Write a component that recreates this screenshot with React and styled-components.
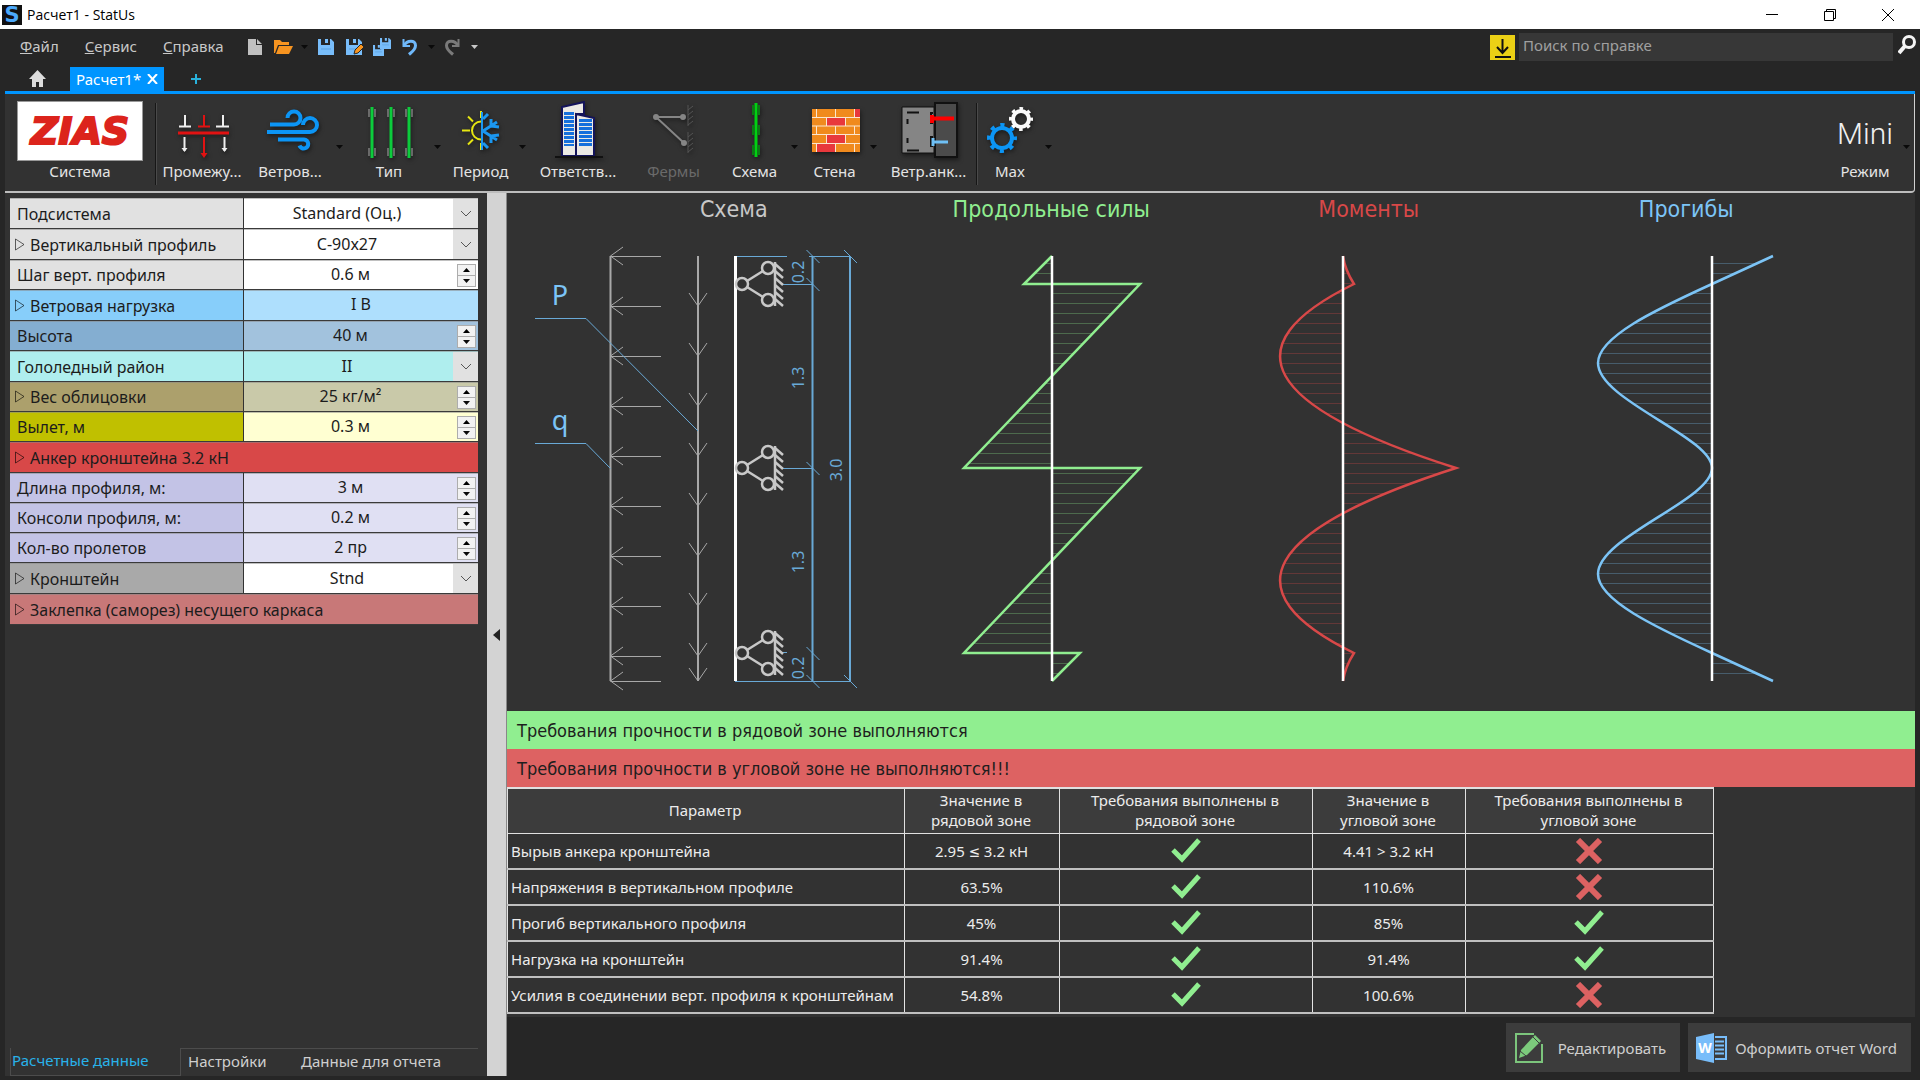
import { useId } from 'react';
import styled, { createGlobalStyle } from 'styled-components';

const GlobalStyle = createGlobalStyle`
  * {
    box-sizing: border-box;
  }
  body {
    margin: 0;
    background: #262626;
    color: #e0e0e0;
    font-family: 'Noto Sans', 'DejaVu Sans Condensed', sans-serif;
    font-size: 15px;
    line-height: 20px;
  }
  button, input, select {
    margin: 0;
    padding: 0;
    border: 0;
    background: none;
    color: inherit;
    font: inherit;
  }
`;

const Window = styled.div`
  display: flex;
  flex-direction: column;
  min-height: 100vh;
`;

/* title bar */

const TitleBar = styled.header`
  display: flex;
  align-items: center;
  height: 29px;
  padding: 0 3px 0 2px;
  background: #fff;
  color: #000;
`;
const AppLogo = styled.span`
  width: 20px;
  height: 20px;
  margin-right: 5px;
  background: #111;
  color: #4ba9fb;
  font: bold 21px/20px 'DejaVu Sans', sans-serif;
  text-align: center;
`;
const AppTitle = styled.h1`
  flex: 1;
  margin: 0;
  font-family: 'Open Sans', 'Noto Sans', sans-serif;
  font-size: 14px;
  font-weight: 400;
`;
const WindowButton = styled.button`
  display: flex;
  align-items: center;
  justify-content: center;
  width: 58px;
  height: 29px;
`;

/* menu and document tabs */

const MenuBar = styled.div`
  display: flex;
  align-items: center;
  height: 36px;
  padding-left: 20px;
`;
const Menu = styled.nav`
  display: flex;
  gap: 26px;
  width: 221px;
  padding-bottom: 2px;
`;
const MenuItem = styled.button`
  color: #c8c8c8;
`;
const QuickButton = styled.button`
  display: flex;
  align-items: center;
  justify-content: center;
  width: ${(props) => (props.$narrow ? '15px' : '28px')};
  height: 28px;
`;
const Search = styled.form`
  display: flex;
  align-items: center;
  width: 430px;
  margin-left: auto;
`;
const DownloadButton = styled.button`
  width: 25px;
  height: 25px;
  margin-right: 4px;
  background: #ebd015;
`;
const SearchInput = styled.input`
  flex: 1;
  min-width: 0;
  height: 28px;
  padding: 0 4px 4px;
  background: #373737;
  &::placeholder {
    color: #a0a0a0;
    opacity: 1;
  }
`;
const SearchButton = styled.button`
  width: 27px;
  height: 28px;
`;
const DocumentTabs = styled.nav`
  display: flex;
  align-items: center;
  height: 29px;
  margin: 0 5px;
  border-bottom: 3px solid #0095ff;
`;
const HomeButton = styled.button`
  width: 65px;
  height: 24px;
  padding-top: 4px;
`;
const DocumentTab = styled.div`
  display: flex;
  align-items: center;
  gap: 6px;
  height: 24px;
  margin-top: 2px;
  padding: 0 6px;
  background: #0095ff;
  color: #fff;
`;
const CloseTab = styled.button`
  display: flex;
`;
const AddTab = styled.button`
  display: flex;
  margin: 2px 0 0 27px;
`;

/* ribbon */

const Ribbon = styled.div`
  display: flex;
  height: 99px;
  margin: 0 5px;
  padding-top: 7px;
  background: #323232;
  border-right: 1px solid #d0d0d0;
  border-bottom: 2px solid #bdbdbd;
  border-bottom-right-radius: 4px;
`;
const RibbonButton = styled.button`
  display: flex;
  flex-direction: column;
  align-items: center;
  width: ${(props) => props.$width}px;
  color: ${(props) => (props.disabled ? '#6a6a6a' : '#e4e4e4')};
  white-space: nowrap;
  svg {
    filter: drop-shadow(1px 2px 2px #1a1a1a);
  }
`;
const DropArrow = styled.button`
  width: 14px;
  height: 84px;
`;
const RibbonSeparator = styled.div`
  width: 2px;
  height: 82px;
  margin-top: 2px;
  border-left: 1px solid #161616;
  border-right: 1px solid #4a4a4a;
`;
const Logo = styled.span`
  display: flex;
  align-items: center;
  justify-content: center;
  width: 126px;
  height: 60px;
  border: 1px solid #999;
  background: #fff;
  color: #dc241c;
  font: italic bold 38px/60px 'DejaVu Sans', sans-serif;
  -webkit-text-stroke: 2px #dc241c;
`;
const ModeButton = styled(RibbonButton)`
  margin-left: auto;
`;
const ModeName = styled.span`
  height: 60px;
  color: #f0f0f0;
  font: 300 30px/66px Roboto, sans-serif;
`;

/* body */

const Body = styled.div`
  display: flex;
  flex: 1;
  margin: 0 5px 4px;
  background: #323232;
`;
const Sidebar = styled.aside`
  display: flex;
  flex-direction: column;
  width: 482px;
  padding: 5px 9px 0 5px;
`;
const Row = styled.div`
  display: flex;
  height: ${(props) => (props.$spin ? '30px' : '31px')};
  border-bottom: 1px solid #3a3a3a;
  color: #1c1c1c;
  font-size: 16px;
`;
const RowLabel = styled.div`
  display: flex;
  align-items: center;
  flex: ${(props) => (props.$full ? '1' : '0 0 233px')};
  padding-left: ${(props) => (props.$expand ? '5px' : '7px')};
  background: ${(props) => props.$bg};
  border-top: 1px solid #8888;
`;
const Expander = styled.button`
  display: flex;
  width: 15px;
`;
const RowValue = styled.div`
  position: relative;
  display: flex;
  flex: 1;
  min-width: 0;
  margin-left: 1px;
  background: ${(props) => props.$bg};
  border-top: 1px solid #8888;
`;
const ValueSelect = styled.select`
  flex: 1;
  padding: 0 28px 1px 0;
  appearance: none;
  text-align: center;
  text-align-last: center;
`;
const SelectArrow = styled.span`
  position: absolute;
  top: 0;
  right: 0;
  bottom: 0;
  display: flex;
  align-items: center;
  justify-content: center;
  width: 25px;
  background: #e1e1e1;
  pointer-events: none;
`;
const ValueInput = styled.input`
  flex: 1;
  min-width: 0;
  padding-bottom: 3px;
  text-align: center;
`;
const Spinner = styled.div`
  display: flex;
  flex-direction: column;
  align-self: center;
  width: 19px;
  margin-right: 2px;
  border: 1px solid #adadad;
  background: #adadad;
  gap: 1px;
`;
const SpinButton = styled.button`
  display: flex;
  align-items: center;
  justify-content: center;
  height: 10px;
  background: #f2f2f2;
`;
const BottomTabs = styled.nav`
  display: flex;
  height: 28px;
  margin-top: auto;
`;
const BottomTab = styled.button`
  flex: ${(props) => props.$flex};
  padding-left: ${(props) => (props.$active ? '1px' : '7px')};
  padding-bottom: 4px;
  border: 0 solid #4c4c4c;
  border-width: ${(props) => (props.$active ? '0 1px 1px' : '1px 0 0')};
  color: ${(props) => (props.$active ? '#29b2ea' : '#cfcfcf')};
  text-align: left;
`;
const Splitter = styled.button`
  display: flex;
  align-items: center;
  justify-content: center;
  width: 20px;
  background: #d3d3d3;
  border-right: 1px solid #888;
`;
const Main = styled.main`
  display: flex;
  flex-direction: column;
  flex: 1;
  min-width: 0;
`;
const Charts = styled.section`
  display: grid;
  grid-template-columns: repeat(4, 1fr);
  padding: 0 70px 0 68px;
`;
const Chart = styled.figure`
  display: flex;
  flex-direction: column;
  align-items: center;
  margin: 0;
  svg {
    overflow: visible;
  }
`;
const ChartTitle = styled.figcaption`
  height: 43px;
  color: ${(props) => props.$color};
  font-family: 'DejaVu Sans Condensed', 'Noto Sans', sans-serif;
  font-size: 23px;
  line-height: 32px;
`;
const Banner = styled.p`
  height: 38px;
  margin: 0;
  padding-left: 10px;
  background: ${(props) => (props.$ok ? '#90ee90' : '#dd6262')};
  color: #1e1e1e;
  font-family: 'DejaVu Sans Condensed', 'Noto Sans', sans-serif;
  font-size: 18px;
  line-height: 40px;
`;
const Results = styled.table`
  width: 1206px;
  border-collapse: collapse;
  table-layout: fixed;
  color: #ececec;
`;
const HeadCell = styled.th`
  width: ${(props) => props.$width}px;
  height: 45px;
  padding: 0 2px 1px 0;
  border: 1px solid #e0e0e0;
  border-top-width: 2px;
  background: #3c3c3c;
  font-weight: 400;
`;
const Cell = styled.td`
  height: 36px;
  padding: 0 4px 0 3px;
  border: 1px solid #e4e4e4;
  border-bottom: 2px solid #c0c0c0;
  text-align: ${(props) => (props.$left ? 'left' : 'center')};
  white-space: nowrap;
  svg {
    display: block;
    margin: 0 auto;
  }
`;
const Footer = styled.footer`
  display: flex;
  justify-content: flex-end;
  gap: 8px;
  margin-top: auto;
  padding: 6px 4px 4px 0;
  background: #262626;
`;
const ActionButton = styled.button`
  display: flex;
  align-items: center;
  height: 49px;
  padding: 0 14px 0 8px;
  gap: ${(props) => props.$gap}px;
  background: #3c3c3c;
  color: #cfcfcf;
`;

/* small icons */

const Caret = ({ color = '#0a0a0a' }) => (
  <svg width="8" height="4" viewBox="0 0 8 4">
    <path d="M0 0h7L3.500 4z" fill={color} />
  </svg>
);

const Disk = ({ x = 0, y = 0, size = 16 }) => (
  <svg x={x} y={y} width={size} height={size} viewBox="0 0 16 16">
    <path d="M0 0h3v6h9V0h1l3 3v13H0z" fill="#78bdfa" />
    <path d="M7 0h3v4H7z" fill="#78bdfa" />
    <path d="M3 10h10" stroke="#5b9fdc" />
  </svg>
);

const UndoIcon = ({ color }) => (
  <g fill="none" stroke={color} strokeWidth="3">
    <path d="M1.500 0v7H8" strokeWidth="2" />
    <path d="M2 6.500C5 1 13.500 0.500 13.500 6.500c0 4-3 6-6.500 9" />
  </g>
);

/* ribbon icons, each on a 60x60 canvas */

const GapIcon = () => (
  <g fill="none" strokeWidth="2">
    <path d="M13 14v11M7 25.500h12M51 14v11M44 25.500h13M12.500 36v14M52.500 36v14" stroke="#eee" />
    <path d="M9.500 47l3 4 3-4zM49.500 47l3 4 3-4z" fill="#eee" stroke="none" />
    <path d="M32 14v11M26 25.500h12M32 36v19" stroke="#e11212" />
    <path d="M6 32h51" stroke="#e11212" strokeWidth="3" />
    <path d="M28.500 52l3.500 5 3.500-5z" fill="#e11212" />
  </g>
);
const WindIcon = () => (
  <path
    d="M10 23.500H34a6.500 6.500 0 1 0-6.500-6.500M7 31h43a7 7 0 1 0-7-7M18 38.500h26a4.500 4.500 0 1 1-4.500 6"
    fill="none"
    stroke="#0c95f5"
    strokeWidth="4"
  />
);
const TypeIcon = () => (
  <g fill="none">
    {[13, 32, 50].map((x) => (
      <g key={x}>
        <path d={`M${x - 3} 8v8M${x + 3} 8v8M${x - 3} 47v8M${x + 3} 47v8`} stroke="#aaa" />
        <path d={`M${x} 6v51`} stroke="#0ccc3c" strokeWidth="3" />
      </g>
    ))}
  </g>
);
const SeasonIcon = () => (
  <g fill="none" strokeWidth="2">
    <path d="M30 20.500a9 9 0 0 0 0 18M11 29.500h8M17 15.500l5 5M17 43.500l5-5M30 10v7M30 42v7" stroke="#e6e612" />
    <path d="M31 11v38" stroke="#1b97f0" />
    <path
      d="M32 30l14-9M32 30l14 9M40 25v-7M40 25l8 1M40 35v7M40 35l8-1M32 18l5-5M32 42l5 5"
      stroke="#1b97f0"
      strokeWidth="3"
    />
  </g>
);
const BuildingIcon = () => (
  <g>
    <path d="M14 55V6l22-5v12l-8 0v42zM28 55V13l18 4v38z" fill="#eceae4" stroke="#14145a" strokeWidth="2" />
    <path d="M21 11v34" stroke="#1670dc" strokeWidth="10" strokeDasharray="3 1" />
    <path d="M37.500 18v27" stroke="#1670dc" strokeWidth="13" strokeDasharray="3 1" />
    <path d="M7 56h48" stroke="#111" strokeWidth="2" />
  </g>
);
const TrussIcon = () => (
  <g stroke="#858585" strokeWidth="2" fill="#858585">
    <path d="M12 16h27M12 16l28 26" />
    <circle cx="12" cy="16" r="2" />
    <circle cx="39" cy="16" r="2" />
    <circle cx="40" cy="42" r="2" />
    <path
      d="M44 4v21M44 31v21M44 9l5-4M44 14l5-4M44 19l5-4M44 24l5-4M44 36l5-4M44 41l5-4M44 46l5-4M44 51l5-4"
      stroke="#555"
      strokeWidth="1"
    />
  </g>
);
const SchemeIcon = () => (
  <g fill="none">
    <path d="M28 4v10M34 4v10M28 24v10M34 24v10M28 44v10M34 44v10" stroke="#0b7d14" strokeWidth="2" />
    <path d="M31 2v54" stroke="#00d212" strokeWidth="3" />
  </g>
);
const WallIcon = () => (
  <g>
    <path d="M7 8h48v43H7z" fill="#f08a1d" />
    <path d="M49 8h6v8h-6zM21 17h19v8H21zM21 34h19v8H21zM11 43h19v8H11z" fill="#e8383c" />
    <path
      d="M7 16.500h48M7 25h48M7 33.500h48M7 42.500h48M11.500 8v8M30.500 8v8M49.500 8v8M21.500 17v8M40.500 17v8M11.500 25v8M30.500 25v8M49.500 25v8M21.500 34v8M40.500 34v8M11.500 43v8M30.500 43v8M49.500 43v8"
      stroke="#fbe6d0"
    />
  </g>
);
const AnchorIcon = () => (
  <g stroke="#111">
    <path d="M3 6h32v46H3z" fill="#858585" />
    <path d="M36 2h22v54H36z" fill="#4b4b4b" strokeWidth="2" />
    <path d="M8 11.500h12M8.500 18v5M8.500 37v5M8 49.500h12M34 12h-2v10h2M34 36h-2v9h2" fill="none" strokeWidth="2" />
    <path d="M33 14v8M34 17.500h21" stroke="#f00" strokeWidth="4" />
    <path d="M34 37v8M33 41h16" stroke="#6fc0f5" strokeWidth="3" />
  </g>
);
const GearIcon = () => (
  <g fill="none">
    <g stroke="#0c95f5">
      <circle cx="22" cy="37" r="10" strokeWidth="4" />
      <circle cx="22" cy="37" r="13" strokeWidth="4" strokeDasharray="4.200 6.010" strokeDashoffset="2.100" />
    </g>
    <g stroke="#fafafa">
      <circle cx="41" cy="18" r="8" strokeWidth="4" />
      <circle cx="41" cy="18" r="10.500" strokeWidth="3" strokeDasharray="3.600 4.640" strokeDashoffset="1.800" />
    </g>
  </g>
);

const ribbonItems = [
  { label: 'Промежу...', width: 90, icon: GapIcon },
  { label: 'Ветров...', width: 86, icon: WindIcon, drop: true },
  { label: 'Тип', width: 84, icon: TypeIcon, drop: true },
  { label: 'Период', width: 71, icon: SeasonIcon, drop: true },
  { label: 'Ответств...', width: 96, icon: BuildingIcon },
  { label: 'Фермы', width: 95, icon: TrussIcon, disabled: true },
  { label: 'Схема', width: 67, icon: SchemeIcon, drop: true },
  { label: 'Стена', width: 65, icon: WallIcon, drop: true },
  { label: 'Ветр.анк...', width: 95, icon: AnchorIcon },
];

const properties = [
  { label: 'Подсистема', value: 'Standard (Оц.)', type: 'select', bg: '#e1e1e1', valueBg: '#fff' },
  { label: 'Вертикальный профиль', value: 'C-90x27', type: 'select', expand: true, bg: '#e1e1e1', valueBg: '#fff' },
  { label: 'Шаг верт. профиля', value: '0.6 м', type: 'spin', bg: '#e1e1e1', valueBg: '#fff' },
  { label: 'Ветровая нагрузка', value: 'I В', type: 'text', expand: true, bg: '#87cefa', valueBg: '#aedffd' },
  { label: 'Высота', value: '40 м', type: 'spin', bg: '#84aed1', valueBg: '#a2c2dd' },
  { label: 'Гололедный район', value: 'II', type: 'select', bg: '#afeeee', valueBg: '#afeeee' },
  { label: 'Вес облицовки', value: '25 кг/м²', type: 'spin', expand: true, bg: '#aca06c', valueBg: '#c9c9a9' },
  { label: 'Вылет, м', value: '0.3 м', type: 'spin', bg: '#c0c000', valueBg: '#ffffd2' },
  { label: 'Анкер кронштейна 3.2 кН', type: 'group', expand: true, bg: '#d84848' },
  { label: 'Длина профиля, м:', value: '3 м', type: 'spin', bg: '#c3c3e6', valueBg: '#e0e0f3' },
  { label: 'Консоли профиля, м:', value: '0.2 м', type: 'spin', bg: '#c3c3e6', valueBg: '#e0e0f3' },
  { label: 'Кол-во пролетов', value: '2 пр', type: 'spin', bg: '#c3c3e6', valueBg: '#e0e0f3' },
  { label: 'Кронштейн', value: 'Stnd', type: 'select', expand: true, bg: '#a9a9a9', valueBg: '#fff' },
  { label: 'Заклепка (саморез) несущего каркаса', type: 'group', expand: true, bg: '#c87878' },
];

const results = [
  ['Вырыв анкера кронштейна', '2.95 ≤ 3.2 кН', true, '4.41 > 3.2 кН', false],
  ['Напряжения в вертикальном профиле', '63.5%', true, '110.6%', false],
  ['Прогиб вертикального профиля', '45%', true, '85%', true],
  ['Нагрузка на кронштейн', '91.4%', true, '91.4%', true],
  ['Усилия в соединении верт. профиля к кронштейнам', '54.8%', true, '100.6%', false],
];

function Property({ item }) {
  const id = useId();
  return (
    <Row $spin={item.type === 'spin'}>
      <RowLabel $bg={item.bg} $expand={item.expand} $full={item.type === 'group'}>
        {item.expand && (
          <Expander aria-label="Развернуть">
            <svg width="10" height="14" viewBox="0 0 10 14">
              <path d="M0.500 1v11L9 6.500z" fill="none" stroke="#0009" />
            </svg>
          </Expander>
        )}
        {item.type === 'group' ? <span>{item.label}</span> : <label htmlFor={id}>{item.label}</label>}
      </RowLabel>
      {item.type !== 'group' && (
        <RowValue $bg={item.valueBg}>
          {item.type === 'select' ? (
            <>
              <ValueSelect id={id} defaultValue={item.value}>
                <option>{item.value}</option>
              </ValueSelect>
              <SelectArrow>
                <svg width="12" height="7" viewBox="0 0 12 7">
                  <path d="M1 1l5 5 5-5" fill="none" stroke="#555" />
                </svg>
              </SelectArrow>
            </>
          ) : (
            <ValueInput id={id} defaultValue={item.value} />
          )}
          {item.type === 'spin' && (
            <Spinner>
              <SpinButton aria-label="Больше">
                <svg width="7" height="4" viewBox="0 0 7 4">
                  <path d="M0 4h7L3.500 0z" />
                </svg>
              </SpinButton>
              <SpinButton aria-label="Меньше">
                <Caret />
              </SpinButton>
            </Spinner>
          )}
        </RowValue>
      )}
    </Row>
  );
}

/* diagrams: 3 m of profile take 425px, supports stand at 0.2, 1.5 and 2.8 m */

const TOP = 20;
const BOTTOM = 445;
const SUPPORTS = [48, 232, 417];
const HATCH = Array.from({ length: 42 }, (_, i) => 27.5 + i * 10);
const LOADS = [20, 70, 120, 170, 220, 270, 320, 370, 420, 445];

// start is the offset of the curve from the axis at the top
function Diagram({ title, color, axis, start = 0, curve }) {
  const id = useId();
  return (
    <Chart>
      <ChartTitle $color={color}>{title}</ChartTitle>
      <svg width="317" height="475" viewBox="0 0 317 475">
        <clipPath id={id}>
          <path d={`M0 ${TOP}H${start}${curve}H0V${TOP}`} transform={`translate(${axis} 0)`} />
        </clipPath>
        <g clipPath={`url(#${id})`} stroke={color} strokeOpacity="0.300">
          {HATCH.map((y) => (
            <path key={y} d={`M0 ${y}h317`} />
          ))}
        </g>
        <path
          d={`M${start} ${TOP}${curve}`}
          transform={`translate(${axis} 0)`}
          fill="none"
          stroke={color}
          strokeWidth="2.500"
        />
        <path d={`M${axis} ${TOP}V${BOTTOM}`} stroke="#fff" strokeWidth="2.500" />
      </svg>
    </Chart>
  );
}

function Scheme() {
  return (
    <Chart>
      <ChartTitle $color="#c8c8c8">Схема</ChartTitle>
      <svg width="317" height="475" viewBox="0 0 317 475" fill="none">
        <g stroke="#a8a8a8">
          <path d={`M35.500 ${TOP}V${BOTTOM}M123 ${TOP}V${BOTTOM}`} strokeWidth="2" />
          {LOADS.map((y) => (
            <path key={y} d={`M86 ${y}.500H35.500M48 ${y - 9}L35.500 ${y}L48 ${y + 9}`} />
          ))}
          {LOADS.slice(1).map((y) => (
            <path key={y} d={`M114 ${y - 13}l9 13l9-13`} />
          ))}
        </g>
        <g stroke="#69a9d6">
          <path d="M-40 82.500H11L123 195M-40 207.500H11L35.500 232.500" />
          <path d="M160 20.500h52M234 20.500h41M160 445.500h115M206 48.500h32M206 232.500h32M206 416.500h6" />
          <path d={`M237.500 ${TOP}V${BOTTOM}M275 ${TOP}V${BOTTOM}`} strokeWidth="2" />
          {[20, 48, 232, 417, 445].map((y) => (
            <path key={y} d={`M231.500 ${y - 6}l13 13`} />
          ))}
          <path d="M269 14l13 13M269 439l13 13" />
        </g>
        <path d={`M160.500 ${TOP}V${BOTTOM}`} stroke="#fff" strokeWidth="3" />
        {SUPPORTS.map((y) => (
          <g key={y} transform={`translate(0 ${y})`} stroke="#c8c8c8" strokeWidth="2.500">
            <circle cx="167" cy="0" r="6" />
            <circle cx="193" cy="-16" r="6" />
            <circle cx="193" cy="16" r="6" />
            <path d="M172-3l16-10M172 3l16 10M200-22v44" />
            <path d="M200-20l8 7M200-13l8 7M200-6l8 7M200 1l8 7M200 8l8 7M200 15l8 7" />
          </g>
        ))}
        <g fill="#7cc4f6" fontSize="27" textAnchor="middle">
          <text x="-15" y="69">P</text>
          <text x="-15" y="194">q</text>
        </g>
        <g fill="#69a9d6" fontSize="16" textAnchor="middle">
          <text transform="translate(229 36) rotate(-90)">0.2</text>
          <text transform="translate(229 142) rotate(-90)">1.3</text>
          <text transform="translate(229 326) rotate(-90)">1.3</text>
          <text transform="translate(229 432) rotate(-90)">0.2</text>
          <text transform="translate(267 234) rotate(-90)">3.0</text>
        </g>
      </svg>
    </Chart>
  );
}

function Mark({ ok }) {
  return (
    <svg width="30" height="26" viewBox="0 0 30 26">
      {ok ? (
        <path d="M2 12l9 9L28 2" fill="none" stroke="#90ee90" strokeWidth="5" />
      ) : (
        <path d="M4 2l22 22M26 2L4 24" fill="none" stroke="#dd6262" strokeWidth="6" />
      )}
    </svg>
  );
}

export default function App() {
  return (
    <Window>
      <GlobalStyle />
      <TitleBar>
        <AppLogo>S</AppLogo>
        <AppTitle>Расчет1 - StatUs</AppTitle>
        <WindowButton aria-label="Свернуть">
          <svg width="12" height="12"><path d="M0 5.500h12" stroke="#000" /></svg>
        </WindowButton>
        <WindowButton aria-label="Развернуть">
          <svg width="12" height="12"><path d="M0.500 2.500h9v9h-9zM2.500 2v-1.500h9v9H10" fill="none" stroke="#000" /></svg>
        </WindowButton>
        <WindowButton aria-label="Закрыть">
          <svg width="12" height="12"><path d="M0 0l12 12M12 0L0 12" stroke="#000" /></svg>
        </WindowButton>
      </TitleBar>

      <MenuBar>
        <Menu>
          <MenuItem><u>Ф</u>айл</MenuItem>
          <MenuItem><u>С</u>ервис</MenuItem>
          <MenuItem><u>С</u>правка</MenuItem>
        </Menu>
        <QuickButton aria-label="Новый">
          <svg width="14" height="16"><path d="M0 0h8v6h6v10H0zM9 0l5 5H9z" fill="#c0c0c0" /></svg>
        </QuickButton>
        <QuickButton aria-label="Открыть">
          <svg width="19" height="14"><path d="M0 0h6l2 2h7v3H4L1 13H0zM5 6h14l-4 8H2z" fill="#f79420" /></svg>
        </QuickButton>
        <QuickButton aria-label="Недавние" $narrow><Caret /></QuickButton>
        <QuickButton aria-label="Сохранить"><Disk /></QuickButton>
        <QuickButton aria-label="Сохранить как">
          <svg width="17" height="16">
            <Disk />
            <path d="M8 15l1-4 6-6 3 3-6 6z" fill="#f79420" stroke="#262626" />
          </svg>
        </QuickButton>
        <QuickButton aria-label="Сохранить все">
          <svg width="18" height="18">
            <Disk x={7} y={0} size={11} />
            <Disk x={0} y={7} size={11} />
          </svg>
        </QuickButton>
        <QuickButton aria-label="Отменить">
          <svg width="17" height="17"><UndoIcon color="#6fb8fa" /></svg>
        </QuickButton>
        <QuickButton aria-label="История отмены" $narrow><Caret /></QuickButton>
        <QuickButton aria-label="Повторить">
          <svg width="17" height="17"><g transform="translate(15 0) scale(-1 1)"><UndoIcon color="#7a7a7a" /></g></svg>
        </QuickButton>
        <QuickButton aria-label="Настроить панель" $narrow><Caret color="#c8c8c8" /></QuickButton>
        <Search>
          <DownloadButton type="button" aria-label="Загрузить">
            <svg width="25" height="25" viewBox="0 0 25 25">
              <path d="M12.500 4v13M7 12l5.500 6 5.500-6M5 22h16" fill="none" stroke="#111" strokeWidth="2" />
            </svg>
          </DownloadButton>
          <SearchInput aria-label="Поиск по справке" placeholder="Поиск по справке" />
          <SearchButton aria-label="Найти">
            <svg width="18" height="20" viewBox="0 0 18 20">
              <circle cx="11" cy="7" r="5.500" fill="none" stroke="#f4f4f4" strokeWidth="3" />
              <path d="M7 11l-6 7" stroke="#f4f4f4" strokeWidth="4" />
            </svg>
          </SearchButton>
        </Search>
      </MenuBar>

      <DocumentTabs>
        <HomeButton aria-label="Главная">
          <svg width="17" height="17" viewBox="0 0 17 17">
            <path d="M8.500 0L0 9h3v8h4v-5h3v5h4V9h3z" fill="#dcdcdc" />
          </svg>
        </HomeButton>
        <DocumentTab>
          Расчет1*
          <CloseTab aria-label="Закрыть вкладку">
            <svg width="11" height="10"><path d="M1 0l9 10M10 0L1 10" stroke="#fff" strokeWidth="2" /></svg>
          </CloseTab>
        </DocumentTab>
        <AddTab aria-label="Новая вкладка">
          <svg width="10" height="10"><path d="M5 0v10M0 5h10" stroke="#29b2dc" strokeWidth="2" /></svg>
        </AddTab>
      </DocumentTabs>

      <Ribbon>
        <RibbonButton $width={150}>
          <Logo>ZIAS</Logo>
          <span>Система</span>
        </RibbonButton>
        <RibbonSeparator />
        {ribbonItems.map(({ label, width, icon: Icon, drop, disabled }) => [
          <RibbonButton key={label} $width={width} disabled={disabled}>
            <svg width="60" height="60" viewBox="0 0 60 60"><Icon /></svg>
            <span>{label}</span>
          </RibbonButton>,
          drop && <DropArrow key={`${label}-drop`} aria-label={`${label}: список`}><Caret /></DropArrow>,
        ])}
        <RibbonSeparator />
        <RibbonButton $width={64}>
          <svg width="60" height="60" viewBox="0 0 60 60"><GearIcon /></svg>
          <span>Max</span>
        </RibbonButton>
        <DropArrow aria-label="Max: список"><Caret /></DropArrow>
        <ModeButton $width={70}>
          <ModeName>Mini</ModeName>
          <span>Режим</span>
        </ModeButton>
        <DropArrow aria-label="Режим: список"><Caret /></DropArrow>
      </Ribbon>

      <Body>
        <Sidebar>
          {properties.map((item) => (
            <Property key={item.label} item={item} />
          ))}
          <BottomTabs>
            <BottomTab $active $flex="0 0 171px">Расчетные данные</BottomTab>
            <BottomTab $flex="0 0 113px">Настройки</BottomTab>
            <BottomTab $flex="1">Данные для отчета</BottomTab>
          </BottomTabs>
        </Sidebar>
        <Splitter aria-label="Свернуть панель">
          <svg width="7" height="12"><path d="M7 0v12L0 6z" fill="#222" /></svg>
        </Splitter>
        <Main>
          <Charts>
            <Scheme />
            <Diagram
              title="Продольные силы"
              color="#90ee90"
              axis={159}
              curve="L-28 48H88L-88 232H88L-88 417H28L0 445"
            />
            <Diagram
              title="Моменты"
              color="#d84848"
              axis={133}
              curve="Q2 34 11 48Q-177 140 113 232Q-177 325 11 417Q2 431 0 445"
            />
            <Diagram
              title="Прогибы"
              color="#7cc4f6"
              axis={184}
              start={61}
              curve="L0 48C-57 74-114 101-114 127C-114 164 0 201 0 232C0 264-114 301-114 338C-114 364-57 391 0 417L61 445"
            />
          </Charts>
          <Banner $ok>Требования прочности в рядовой зоне выполняются</Banner>
          <Banner>Требования прочности в угловой зоне не выполняются!!!</Banner>
          <Results>
            <thead>
              <tr>
                <HeadCell $width={397}>Параметр</HeadCell>
                <HeadCell $width={155}>Значение в<br />рядовой зоне</HeadCell>
                <HeadCell $width={253}>Требования выполнены в<br />рядовой зоне</HeadCell>
                <HeadCell $width={153}>Значение в<br />угловой зоне</HeadCell>
                <HeadCell $width={248}>Требования выполнены в<br />угловой зоне</HeadCell>
              </tr>
            </thead>
            <tbody>
              {results.map(([name, ordinary, ordinaryOk, corner, cornerOk]) => (
                <tr key={name}>
                  <Cell $left>{name}</Cell>
                  <Cell>{ordinary}</Cell>
                  <Cell><Mark ok={ordinaryOk} /></Cell>
                  <Cell>{corner}</Cell>
                  <Cell><Mark ok={cornerOk} /></Cell>
                </tr>
              ))}
            </tbody>
          </Results>
          <Footer>
            <ActionButton $gap={14}>
              <svg width="30" height="32" viewBox="0 0 30 32" fill="none">
                <path d="M20 2H2v28h26V12" stroke="#7cc57c" strokeWidth="2" />
                <path d="M5 26l2-8L21 3l6 6-14 14z" fill="#7ccb7c" />
                <path d="M6 19l6 5M19 5l6 6" stroke="#3c3c3c" strokeWidth="1" />
              </svg>
              Редактировать
            </ActionButton>
            <ActionButton $gap={8}>
              <svg width="31" height="30" viewBox="0 0 31 30">
                <path d="M0 4L18 0v30L0 26z" fill="#78bdfa" />
                <path d="M19 4h11v22H19" fill="none" stroke="#78bdfa" strokeWidth="2" />
                <path d="M19 8.500h9M19 12.500h9M19 16.500h9M19 20.500h9" stroke="#78bdfa" strokeWidth="2" />
                <text x="9" y="20" fill="#fff" fontSize="14" fontWeight="700" textAnchor="middle">W</text>
              </svg>
              Оформить отчет Word
            </ActionButton>
          </Footer>
        </Main>
      </Body>
    </Window>
  );
}
